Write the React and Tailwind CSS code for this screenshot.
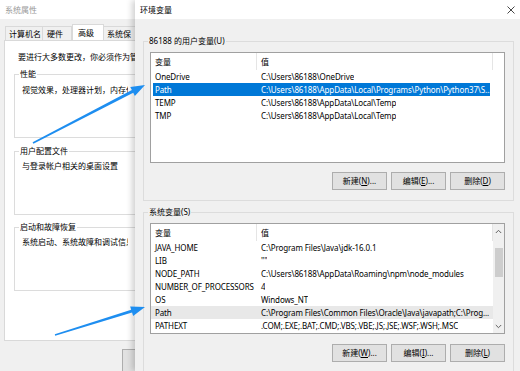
import React from "react";

const F = { fontFamily: '"Noto Sans", "Noto Sans CJK SC", sans-serif' };

function Btn({ pre, k, post, w = "w-[55px]" }) {
  return (
    <div className={`${w} h-[18px] flex items-center justify-center bg-[#e1e1e1] border border-[#adadad] text-[8px] leading-[12px] text-black whitespace-nowrap`}>
      <span>
        {pre}(<span className="underline">{k}</span>){post}
      </span>
    </div>
  );
}

function Row({ name, value, cls = "", nameCls = "w-[104px] pl-[2px]" }) {
  return (
    <div className={`flex h-[13px] items-center text-[8px] leading-[12px] whitespace-nowrap tracking-[-0.12px] ${cls}`}>
      <div className={`${nameCls} shrink-0 overflow-hidden`}>{name}</div>
      <div className="pl-[4px] overflow-hidden">{value}</div>
    </div>
  );
}

function Header({ col1 = "w-[106px]", rest = "w-[236px]" }) {
  return (
    <div className="flex h-[17px] items-center text-[8px] leading-[12px] text-black shrink-0">
      <div className={`${col1} h-full flex items-center pl-[4px] border-r border-[#e5e5e5]`}>变量</div>
      <div className={`${rest} h-full flex items-center pl-[4px] border-r border-[#e5e5e5]`}>值</div>
    </div>
  );
}

function Legend({ children }) {
  return (
    <legend className="ml-[4px] px-[1px] text-[8px] leading-[12px] text-black whitespace-nowrap">{children}</legend>
  );
}

export default function App() {
  return (
    <div className="relative w-[520px] h-[371px] overflow-hidden bg-[#f0f0f0]" style={F}>
      {/* Left window: 系统属性 (its right part lies under the other window) */}
      <div className="absolute left-0 top-0 w-[136px] h-[371px] bg-[#f0f0f0] flex flex-col overflow-hidden">
        <div className="h-[19px] bg-white flex items-center pl-[5px] text-[8px] leading-[12px] text-[#999999] shrink-0">
          系统属性
        </div>
        <div className="flex items-end h-[21px] pl-[5px] text-[8px] leading-[12px] text-black whitespace-nowrap shrink-0 overflow-hidden">
          <div className="h-[14px] w-[38px] shrink-0 flex items-center pl-[3px] border border-b-0 border-[#d9d9d9] bg-[#f0f0f0]">计算机名</div>
          <div className="h-[14px] w-[29px] shrink-0 flex items-center pl-[4px] border border-b-0 border-l-0 border-[#d9d9d9] bg-[#f0f0f0]">硬件</div>
          <div className="relative z-10 -mb-px h-[17px] w-[32px] shrink-0 flex items-center pl-[5px] pb-[1px] border border-b-0 border-[#d9d9d9] bg-white">高级</div>
          <div className="h-[14px] w-[32px] shrink-0 flex items-center pl-[3px] border border-b-0 border-l-0 border-[#d9d9d9] bg-[#f0f0f0] overflow-hidden">系统保</div>
        </div>
        <div className="ml-[4px] w-[250px] h-[301px] bg-white border border-[#d9d9d9] pl-[9px] pt-[10px] flex flex-col text-[8px] leading-[12px] text-black shrink-0">
          <div className="pl-[4px] w-[122px] whitespace-nowrap overflow-hidden">要进行大多数更改，你必须作为管</div>
          <fieldset className="mt-[5px] w-[230px] h-[70px] border border-[#dcdcdc]">
            <Legend>性能</Legend>
            <div className="pl-[7px] pt-[4px] w-[113px] whitespace-nowrap overflow-hidden">视觉效果，处理器计划，内存使</div>
          </fieldset>
          <fieldset className="mt-[7px] w-[230px] h-[70px] border border-[#dcdcdc]">
            <Legend>用户配置文件</Legend>
            <div className="pl-[7px] pt-[3px] w-[113px] whitespace-nowrap overflow-hidden">与登录帐户相关的桌面设置</div>
          </fieldset>
          <fieldset className="mt-[6px] w-[230px] h-[70px] border border-[#dcdcdc]">
            <Legend>启动和故障恢复</Legend>
            <div className="pl-[7px] pt-[3px] w-[113px] whitespace-nowrap overflow-hidden">系统启动、系统故障和调试信息</div>
          </fieldset>
        </div>
        <div className="ml-[122px] mt-[8px] w-[70px] h-[23px] bg-[#e1e1e1] border border-[#adadad] shrink-0"></div>
      </div>

      {/* Right window: 环境变量 */}
      <div className="absolute left-[135px] top-0 w-[385px] h-[371px] bg-[#f0f0f0] flex flex-col shadow-[-3px_0_6px_rgba(0,0,0,0.18)]">
        <div className="h-[19px] bg-white flex items-center justify-between pl-[5px] pr-[6px] shrink-0">
          <span className="text-[8px] leading-[12px] text-black">环境变量</span>
          <svg width="8" height="8" viewBox="0 0 8 8" className="mr-[-1px]">
            <path d="M0.5 0.5 L7.5 7.5 M7.5 0.5 L0.5 7.5" stroke="#333" strokeWidth="0.9" fill="none" />
          </svg>
        </div>

        <fieldset className="ml-[8px] mt-[16px] w-[371px] border border-[#dcdcdc] pb-[10px] shrink-0">
          <Legend>86188 的用户变量(U)</Legend>
          <div className="ml-[6px] mt-[5px] w-[355px] h-[111px] bg-white border border-[#a0a0a0] flex flex-col overflow-hidden text-black">
            <Header col1="w-[106px]" rest="w-[236px]" />
            <div className="ml-[2px] w-[337px]">
              <Row name="OneDrive" value="C:\Users\86188\OneDrive" />
              <Row name="Path" value="C:\Users\86188\AppData\Local\Programs\Python\Python37\S..." cls="bg-[#0078d7] text-white" />
              <Row name="TEMP" value="C:\Users\86188\AppData\Local\Temp" />
              <Row name="TMP" value="C:\Users\86188\AppData\Local\Temp" />
            </div>
          </div>
          <div className="mt-[9px] ml-[188px] flex gap-[4px]">
            <Btn pre="新建" k="N" post="..." />
            <Btn pre="编辑" k="E" post="..." />
            <Btn pre="删除" k="D" post="" />
          </div>
        </fieldset>

        <fieldset className="ml-[8px] mt-[5px] w-[371px] h-[200px] border border-[#dcdcdc] shrink-0">
          <Legend>系统变量(S)</Legend>
          <div className="ml-[6px] mt-[5px] w-[355px] h-[111px] bg-white border border-[#a0a0a0] flex overflow-hidden text-black">
            <div className="flex-1 flex flex-col min-w-0">
              <Header col1="w-[106px]" rest="w-[236px]" />
              <Row name="JAVA_HOME" value="C:\Program Files\Java\jdk-16.0.1" nameCls="w-[106px] pl-[4px]" />
              <Row name="LIB" value={'""'} nameCls="w-[106px] pl-[4px]" />
              <Row name="NODE_PATH" value="C:\Users\86188\AppData\Roaming\npm\node_modules" nameCls="w-[106px] pl-[4px]" />
              <Row name="NUMBER_OF_PROCESSORS" value="4" nameCls="w-[106px] pl-[4px]" />
              <Row name="OS" value="Windows_NT" nameCls="w-[106px] pl-[4px]" />
              <Row name="Path" value="C:\Program Files\Common Files\Oracle\Java\javapath;C:\Prog..." cls="bg-[#e8e8e8]" nameCls="w-[106px] pl-[4px]" />
              <Row name="PATHEXT" value=".COM;.EXE;.BAT;.CMD;.VBS;.VBE;.JS;.JSE;.WSF;.WSH;.MSC" nameCls="w-[106px] pl-[4px]" />
            </div>
            <div className="w-[11px] h-full bg-[#f0f0f0] flex flex-col items-center shrink-0">
              <div className="h-[14px] flex items-center justify-center">
                <svg width="7" height="5" viewBox="0 0 7 5"><path d="M0.8 4 L3.5 1.3 L6.2 4" stroke="#606060" strokeWidth="1" fill="none" /></svg>
              </div>
              <div className="mt-[10px] w-[8px] h-[29px] bg-[#cdcdcd]"></div>
              <div className="flex-1"></div>
              <div className="h-[14px] flex items-center justify-center">
                <svg width="7" height="5" viewBox="0 0 7 5"><path d="M0.8 1 L3.5 3.7 L6.2 1" stroke="#606060" strokeWidth="1" fill="none" /></svg>
              </div>
            </div>
          </div>
          <div className="mt-[10px] ml-[188px] flex gap-[4px]">
            <Btn pre="新建" k="W" post="..." />
            <Btn pre="编辑" k="I" post="..." />
            <Btn pre="删除" k="L" post="" />
          </div>
        </fieldset>
      </div>

      {/* Blue arrows overlay */}
      <svg className="absolute left-0 top-0 pointer-events-none" width="520" height="371" viewBox="0 0 520 371">
        <polygon
          points="32.6,142.3 131.88,90.11 130.27,86.99 145,85 134.87,95.88 133.26,92.77 33.4,143.7"
          fill="#1e8ef0"
        />
        <polygon
          points="54.8,334.3 131.18,309.73 130.15,306.39 145,307 133.12,315.94 132.08,312.59 55.2,335.7"
          fill="#1e8ef0"
        />
      </svg>
    </div>
  );
}
